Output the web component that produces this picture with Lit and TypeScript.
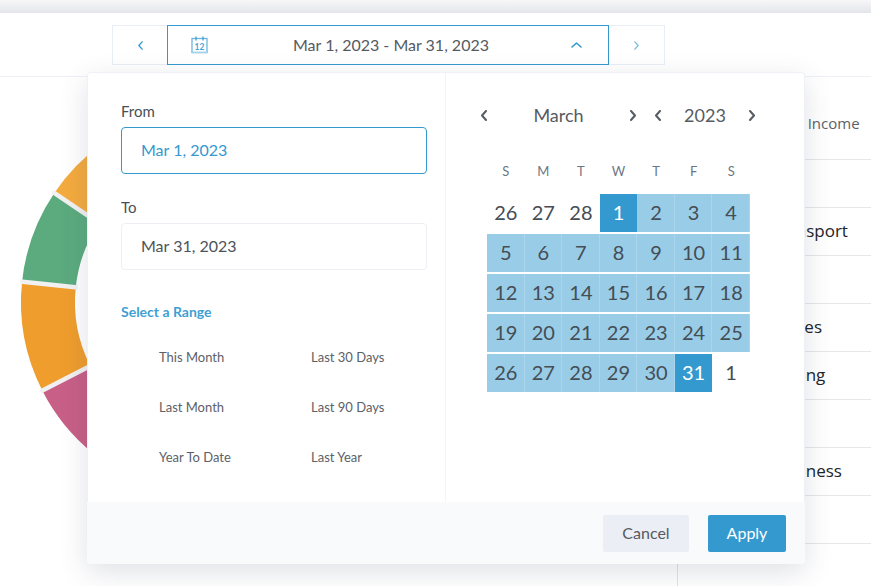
import { LitElement, html, css, svg } from "lit";
import { customElement } from "lit/decorators.js";

const CX = 216, CY = 302, RO = 195, RI = 141;
const pt = (r: number, a: number) => {
  const t = (a * Math.PI) / 180;
  return `${(CX - r * Math.cos(t)).toFixed(2)} ${(CY + r * Math.sin(t)).toFixed(2)}`;
};
// angles measured from the left of centre; positive = downward
const sectors = [
  { from: -34, to: -75, color: "#f4ab3e" },
  { from: -6, to: -34, color: "#5bab7e" },
  { from: 27, to: -6, color: "#ef9d2c" },
  { from: 75, to: 27, color: "#c85f86" },
];
const gaps = [-34, -6, 27];
const sectorPath = (from: number, to: number) =>
  `M${pt(RO, from)} A${RO} ${RO} 0 0 1 ${pt(RO, to)} L${pt(RI, to)} A${RI} ${RI} 0 0 0 ${pt(RI, from)} Z`;

const rows = [
  { t: "Other Income", c: "muted" },
  { t: "", c: "" },
  { t: "Transport", c: "" },
  { t: "", c: "" },
  { t: "Wages", c: "" },
  { t: "Coding", c: "" },
  { t: "", c: "" },
  { t: "Business", c: "shift" },
  { t: "", c: "" },
];

const ranges = ["This Month", "Last 30 Days", "Last Month", "Last 90 Days", "Year To Date", "Last Year"];
const weekdays = ["S", "M", "T", "W", "T", "F", "S"];

type Cell = { d: number; k: string };
const cells: Cell[] = [
  ...[26, 27, 28].map((d) => ({ d, k: "" })),
  ...Array.from({ length: 31 }, (_, i) => ({
    d: i + 1,
    k: i === 0 || i === 30 ? "end" : "range",
  })),
  { d: 1, k: "" },
];

const chevron = (dir: "l" | "r" | "u", cls: string) => {
  const pts = dir === "l" ? "6,1 2,5.5 6,10" : dir === "r" ? "2,1 6,5.5 2,10" : "1,6 5.5,2 10,6";
  const w = dir === "u" ? 11 : 8;
  const h = dir === "u" ? 8 : 11;
  return html`<svg class=${cls} width=${w} height=${h} viewBox="0 0 ${w} ${h}">${svg`<polyline points=${pts} fill="none" stroke="currentColor" stroke-linecap="round" stroke-linejoin="round"></polyline>`}</svg>`;
};

@customElement("app-root")
export class AppRoot extends LitElement {
  static styles = css`
    :host {
      display: block;
      position: relative;
      height: 100vh;
      overflow: hidden;
      background: #fff;
      font-family: "Lato", "Open Sans", sans-serif;
      color: #444b52;
    }
    .band {
      height: 13px;
      background: linear-gradient(#f7f7f9, #e4e5ea);
    }
    .topbar {
      height: 64px;
      box-sizing: border-box;
      border-bottom: 1px solid #eef0f6;
      padding: 12px 0 0 112px;
    }
    .picker {
      display: flex;
      width: 553px;
      height: 40px;
    }
    .step {
      width: 56px;
      flex: none;
      box-sizing: border-box;
      border: 1px solid #e9edf5;
      display: flex;
      align-items: center;
      justify-content: center;
      color: #3399cf;
    }
    .step.prev {
      width: 55px;
      border-right: 0;
    }
    .step.next {
      border-left: 0;
      color: #7cbde0;
    }
    .step svg {
      width: 7px;
      height: 9px;
      stroke-width: 1.6;
    }
    .current {
      flex: 1;
      box-sizing: border-box;
      border: 1px solid #3399cf;
      display: flex;
      align-items: center;
      padding: 0 26px 0 23px;
      font-size: 16px;
      color: #555a5f;
    }
    .current span {
      flex: 1;
      text-align: center;
      padding-left: 2px;
      padding-bottom: 2px;
    }
    .current .up {
      color: #3399cf;
      stroke-width: 1.6;
    }
    .main {
      display: flex;
      height: 509px;
    }
    .chart {
      width: 677px;
      flex: none;
    }
    .chart svg {
      display: block;
    }
    .list {
      flex: 1;
      border-left: 1px solid #e2e3e6;
      padding-top: 35px;
    }
    .row {
      height: 48px;
      box-sizing: border-box;
      border-bottom: 1px solid #e6e7ea;
      padding-left: 92px;
      padding-bottom: 2px;
      display: flex;
      align-items: center;
      font-family: "Open Sans", sans-serif;
      font-size: 17px;
      color: #20242a;
      white-space: nowrap;
    }
    .row.muted {
      font-size: 15px;
      color: #5a5f66;
      padding-left: 85px;
      padding-bottom: 25px;
    }
    .row.shift {
      padding-left: 94px;
    }
    .popover {
      position: absolute;
      left: 87px;
      top: 72px;
      width: 718px;
      height: 492px;
      box-sizing: border-box;
      background: #fff;
      border-radius: 4px;
      box-shadow: 0 8px 28px rgba(60, 70, 100, 0.16), inset 0 0 0 1px #f0f1f7;
      display: flex;
      flex-direction: column;
      overflow: hidden;
    }
    .body {
      flex: 1;
      display: flex;
      min-height: 0;
    }
    .left {
      width: 359px;
      box-sizing: border-box;
      border-right: 1px solid #f3f4f8;
      padding: 30px 18px 0 34px;
    }
    .label {
      font-size: 15px;
      line-height: 18px;
      color: #4a4f55;
      margin-bottom: 7px;
    }
    .input {
      height: 47px;
      box-sizing: border-box;
      border: 1px solid #edeff4;
      border-radius: 4px;
      padding-left: 19px;
      padding-bottom: 2px;
      display: flex;
      align-items: center;
      font-size: 16px;
      color: #4d5358;
      margin-bottom: 24px;
    }
    .input.active {
      border-color: #3399cf;
      color: #3399cf;
    }
    .input.last {
      margin-bottom: 33px;
      padding-bottom: 3px;
    }
    .range-title {
      font-size: 14px;
      line-height: 17px;
      font-weight: 700;
      color: #3f9fd3;
      margin-bottom: 12px;
    }
    .ranges {
      display: grid;
      grid-template-columns: 152px 1fr;
      grid-auto-rows: 50px;
      padding-left: 38px;
    }
    .ranges div {
      font-size: 13px;
      line-height: 50px;
      color: #5c6167;
      height: 50px;
    }
    .right {
      flex: 1;
      padding: 0 0 0 34px;
    }
    .cal-head {
      display: flex;
      align-items: center;
      height: 24px;
      margin-top: 31px;
      color: #222;
    }
    .cal-head svg {
      stroke-width: 2;
      flex: none;
    }
    .month,
    .year {
      display: flex;
      align-items: center;
      justify-content: space-between;
      font-size: 18px;
      color: #565c62;
    }
    .month {
      width: 157px;
      margin-right: 17px;
    }
    .year {
      width: 102px;
    }
    .month span,
    .year span {
      flex: 1;
      text-align: center;
    }
    .grid {
      display: grid;
      grid-template-columns: repeat(7, 37.57px);
      width: 263px;
      margin-left: 7px;
    }
    .wd {
      height: 67px;
      line-height: 46px;
      padding-top: 21px;
      box-sizing: border-box;
      text-align: center;
      font-size: 13px;
      color: #6b7785;
    }
    .cell {
      height: 38px;
      margin-bottom: 2px;
      padding-bottom: 3px;
      box-sizing: border-box;
      display: flex;
      align-items: center;
      justify-content: center;
      font-size: 20px;
      color: #454d55;
    }
    .cell.range {
      background: #99cce7;
      box-shadow: inset -1px 0 0 #aad5ec;
    }
    .cell.end {
      background: #3399cf;
      color: #fff;
    }
    .footer {
      height: 62px;
      flex: none;
      background: #f9fafc;
      display: flex;
      align-items: center;
      justify-content: flex-end;
      gap: 19px;
      padding: 0 19px 0 0;
    }
    .btn {
      height: 37px;
      box-sizing: border-box;
      padding-bottom: 2px;
      border-radius: 2px;
      display: flex;
      align-items: center;
      justify-content: center;
      font-size: 16px;
    }
    .cancel {
      width: 86px;
      background: #ebeef5;
      color: #555a60;
    }
    .apply {
      width: 78px;
      background: #3399cf;
      color: #fff;
    }
  `;

  render() {
    return html`
      <div class="band"></div>
      <div class="topbar">
        <div class="picker">
          <div class="step prev">${chevron("l", "")}</div>
          <div class="current">
            <svg width="18" height="18" viewBox="0 0 18 18">
              <rect x="1" y="2.5" width="15" height="14" fill="none" stroke="#6db5dd" stroke-width="1.3"></rect>
              <path d="M1 16.5h15" stroke="#a5d2ea" stroke-width="1.5"></path>
              <path d="M5 0.5v4M12 0.5v4" stroke="#3399cf" stroke-width="1.2"></path>
              <text x="8.5" y="13.5" text-anchor="middle" font-size="8.5" font-weight="700" fill="#4aa5d5" font-family="Lato, sans-serif">12</text>
            </svg>
            <span>Mar 1, 2023 - Mar 31, 2023</span>
            ${chevron("u", "up")}
          </div>
          <div class="step next">${chevron("r", "")}</div>
        </div>
      </div>
      <div class="main">
        <div class="chart">
          <svg width="677" height="509" viewBox="0 77 677 509">
            ${sectors.map((s) => svg`<path d=${sectorPath(s.from, s.to)} fill=${s.color}></path>`)}
            ${gaps.map(
              (a) => svg`<path d="M${pt(RO + 2, a)} L${pt(RI - 2, a)}" stroke="#f1f1f2" stroke-width="4.5"></path>`
            )}
          </svg>
        </div>
        <div class="list">
          ${rows.map((r) => html`<div class="row ${r.c}">${r.t}</div>`)}
        </div>
      </div>
      <div class="popover">
        <div class="body">
          <div class="left">
            <div class="label">From</div>
            <div class="input active">Mar 1, 2023</div>
            <div class="label">To</div>
            <div class="input last">Mar 31, 2023</div>
            <div class="range-title">Select a Range</div>
            <div class="ranges">${ranges.map((r) => html`<div>${r}</div>`)}</div>
          </div>
          <div class="right">
            <div class="cal-head">
              <div class="month">
                ${chevron("l", "")}<span>March</span>${chevron("r", "")}
              </div>
              <div class="year">
                ${chevron("l", "")}<span>2023</span>${chevron("r", "")}
              </div>
            </div>
            <div class="grid">
              ${weekdays.map((w) => html`<div class="wd">${w}</div>`)}
              ${cells.map((c) => html`<div class="cell ${c.k}">${c.d}</div>`)}
            </div>
          </div>
        </div>
        <div class="footer">
          <div class="btn cancel">Cancel</div>
          <div class="btn apply">Apply</div>
        </div>
      </div>
    `;
  }
}
